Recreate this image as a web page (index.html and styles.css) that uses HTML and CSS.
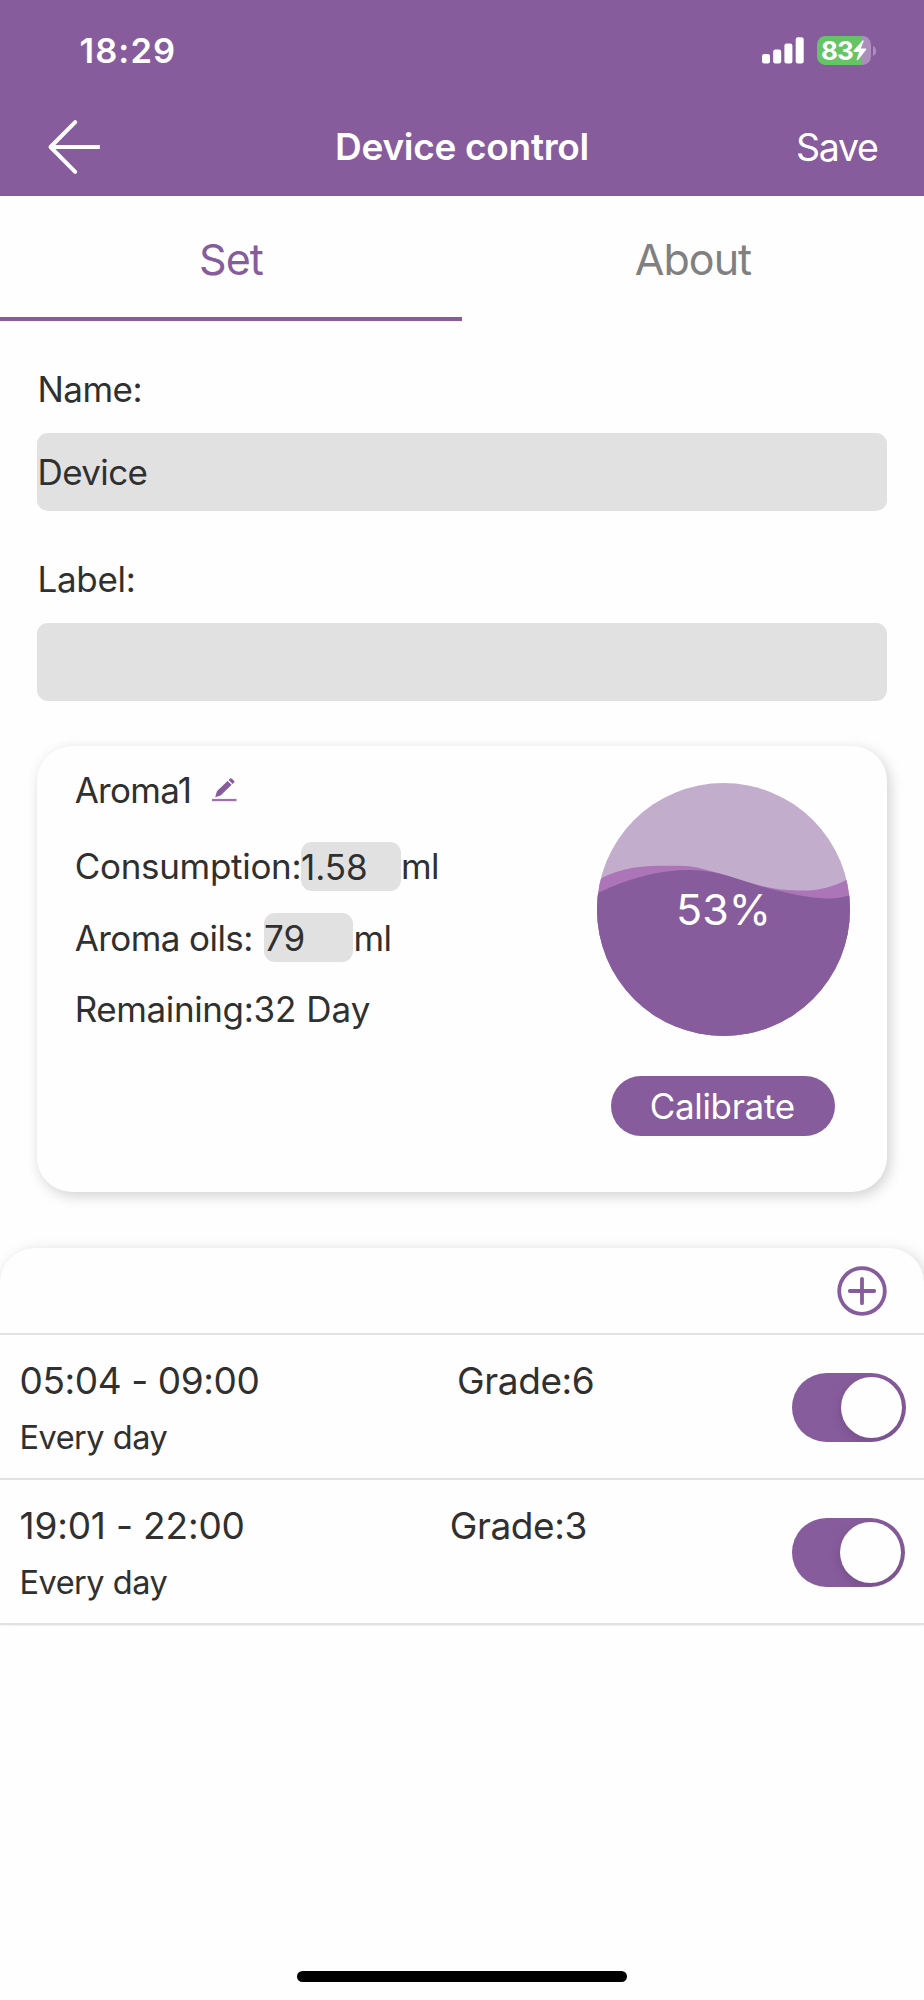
FILE: index.html
```html
<!DOCTYPE html>
<html lang="en">
<head>
<meta charset="utf-8">
<title>Device control</title>
<link rel="stylesheet" href="styles.css">
</head>
<body>
<header class="header">
  <div class="status">
    <span class="clock">18:29</span>
    <div class="status-icons">
      <svg class="signal" width="42" height="27" viewBox="0 0 42 27" fill="#fff">
        <rect x="0" y="17" width="8" height="9.5" rx="2.2"/>
        <rect x="11.2" y="12.5" width="8" height="14" rx="2.2"/>
        <rect x="22.4" y="6.5" width="8" height="20" rx="2.2"/>
        <rect x="33.7" y="0.3" width="8" height="26.2" rx="2.2"/>
      </svg>
      <div class="battery">
        <span class="battery-level">83</span>
        <svg class="bolt" width="14" height="21" viewBox="0 0 14 21" fill="#fff"><path d="M9.8 0.3L0.6 10.6Q0.1 11.8 1.3 11.9H6L3.6 19.6Q4 20.8 5 20L13.2 9.8Q13.5 8.7 12.4 8.6H7.8L10.7 1Q10.6 0 9.8 0.3Z"/></svg>
      </div>
      <svg class="battery-tip" width="4" height="10" viewBox="0 0 4 10"><path d="M0 0C4.2 1.6 4.2 8.4 0 10Z" fill="#ab8ebb"/></svg>
    </div>
  </div>
  <nav class="nav">
    <svg class="back" width="53" height="56" viewBox="0 0 53 56" fill="none" stroke="#fff" stroke-width="4">
      <path d="M28.2 3.2L3.5 28L28.2 52.8" stroke-linecap="round" stroke-linejoin="round"/><path d="M4 28H52.8"/>
    </svg>
    <h1 class="title">Device control</h1>
    <span class="save">Save</span>
  </nav>
</header>

<div class="tabs">
  <div class="tab tab-active">Set</div>
  <div class="tab">About</div>
</div>

<main class="form">
  <label class="label label-name">Name:</label>
  <div class="input">Device</div>
  <label class="label label-tag">Label:</label>
  <div class="input"></div>

  <section class="card">
    <div class="details">
      <div class="detail detail-title">
        <span class="aroma">Aroma1</span>
        <svg class="pencil" width="25" height="24" viewBox="0 0 25 24" fill="#875c9c">
          <path d="M3.2 19.3L4.6 14.2Q4.9 13.3 5.6 12.6L15.6 2.9L19.6 6.8L9.4 16.8Q8.8 17.4 7.8 17.8Z"/>
          <path d="M16.6 1.9L18 0.6Q19 -0.1 19.9 0.7L22 2.8Q22.8 3.7 22.1 4.5L20.6 5.9Z"/>
          <rect x="0" y="20.9" width="24.5" height="2.3" fill="#9a75ac"/>
        </svg>
      </div>
      <div class="detail"><span class="key key-consumption">Consumption:</span><span class="chip chip-rate">1.58</span><span class="unit">ml</span></div>
      <div class="detail"><span class="key key-oils">Aroma oils:</span><span class="chip chip-oils">79</span><span class="unit">ml</span></div>
      <div class="detail"><span class="key key-remaining">Remaining:</span><span class="days">32 Day</span></div>
    </div>
    <div class="level">
      <div class="gauge">
        <svg class="waves" width="253" height="253" viewBox="0 0 253 253">
          <clipPath id="disc"><circle cx="126.5" cy="126.5" r="126.5"/></clipPath>
          <g clip-path="url(#disc)">
            <rect width="253" height="253" fill="#c2adcc"/>
            <path d="M0 97.5C18 87.5 36 83 63.5 82.8C96 82.3 96 83 123.5 90.8C151 99 172 107.5 200 107.5C222 108 234 105 253 95V253H0Z" fill="#ac75b8"/>
            <path d="M0 110.5C32 95 62 87 93 87C120 87 138 95.5 163.5 103.2C188 110 212 115.7 233.5 115.5C242 115.3 247 114 253 112V253H0Z" fill="#875c9c"/>
          </g>
        </svg>
        <span class="percent">53%</span>
      </div>
      <div class="calibrate">Calibrate</div>
    </div>
  </section>
</main>

<section class="sheet">
  <div class="sheet-bar">
    <svg class="add" width="50" height="50" viewBox="0 0 50 50" fill="none" stroke="#875c9c" stroke-width="3.8">
      <circle cx="25" cy="25" r="22.8"/><path d="M12.8 25H37.2M25 12.8V37.2" stroke-linecap="round"/>
    </svg>
  </div>
  <div class="schedule">
    <div class="when"><span class="time time-first">05:04 - 09:00</span><span class="repeat">Every day</span></div>
    <span class="grade">Grade:6</span>
    <div class="toggle"><div class="knob"></div></div>
  </div>
  <div class="schedule schedule-last">
    <div class="when"><span class="time">19:01 - 22:00</span><span class="repeat">Every day</span></div>
    <span class="grade">Grade:3</span>
    <div class="toggle"><div class="knob"></div></div>
  </div>
</section>
<div class="home-indicator"></div>
</body>
</html>
```
FILE: styles.css
```css
* { box-sizing: border-box; }
body {
  margin: 0;
  min-height: 2000px;
  display: flex;
  flex-direction: column;
  overflow-x: hidden;
  background: #fefefe;
  color: #303030;
  font-family: Inter, "Liberation Sans", sans-serif;
  font-size: 35px;
  white-space: nowrap;
}
.header { height: 196.4px; background: #875c9c; color: #fff; }
.status {
  height: 101px;
  padding: 0 47.5px 0 79.5px;
  display: flex;
  align-items: center;
  justify-content: space-between;
}
.clock { font-size: 34.5px; font-weight: 600; letter-spacing: 1.08px; line-height: 101px; }
.status-icons { display: flex; align-items: center; }
.battery {
  width: 54px;
  height: 29px;
  margin-left: 12.5px;
  padding-left: 4.5px;
  display: flex;
  align-items: center;
  border-radius: 8.5px;
  background: linear-gradient(90deg, #65c466 83%, #ab8ebb 83%);
}
.battery-level { width: 32px; font-size: 26px; font-weight: 700; letter-spacing: -0.8px; line-height: 29px; }
.battery-tip { margin-left: 2px; }
.nav {
  height: 92px;
  padding: 0 46.5px;
  display: grid;
  grid-template-columns: 1fr auto 1fr;
  align-items: center;
}
.title { margin: 0; font-size: 37px; font-weight: 600; letter-spacing: -0.29px; line-height: 92px; }
.save { justify-self: end; font-size: 37.5px; letter-spacing: -1.3px; }

.tabs { height: 125px; display: flex; font-size: 43px; color: #808080; }
.tab {
  flex: 1;
  padding-top: 6px;
  border-bottom: 4.5px solid transparent;
  text-align: center;
  line-height: 114px;
  letter-spacing: -1px;
}
.tab-active { color: #875c9c; border-color: #875c9c; letter-spacing: -0.83px; }

.form { padding: 45.6px 37px 0; display: flex; flex-direction: column; }
.label { line-height: 44px; margin-bottom: 22px; padding-left: 0.5px; }
.label-name { letter-spacing: -0.52px; }
.label-tag { letter-spacing: -0.3px; margin-top: 46px; }
.input { height: 78px; padding-left: 0.5px; border-radius: 11px; background: #e1e1e1; line-height: 79px; letter-spacing: -0.6px; }

.card {
  height: 446.5px;
  margin-top: 44.8px;
  display: flex;
  justify-content: space-between;
  border-radius: 35px;
  background: #fefefe;
  box-shadow: 3px 4px 14px rgba(0, 0, 0, 0.18);
}
.details { padding: 4px 0 0 37.7px; }
.detail { height: 71.5px; display: flex; align-items: center; }
.detail-title { height: 80.5px; gap: 18px; }
.aroma { width: 119px; letter-spacing: -0.73px; }
.key-consumption { width: 226.3px; letter-spacing: -0.3px; }
.key-oils { width: 189.3px; letter-spacing: -0.58px; }
.key-remaining { width: 178.8px; letter-spacing: -0.39px; }
.chip { height: 49px; border-radius: 11px; background: #e1e1e1; line-height: 50px; }
.chip-rate { width: 100px; }
.chip-oils { width: 89.5px; }
.unit { letter-spacing: -0.6px; }
.level { width: 328px; padding-top: 37px; display: flex; flex-direction: column; align-items: center; gap: 40.5px; color: #fff; }
.gauge { display: grid; place-items: center; }
.waves, .percent { grid-area: 1 / 1; }
.percent { font-size: 43px; padding-left: 1px; }
.calibrate { width: 224px; height: 60px; padding-right: 1.5px; border-radius: 30px; background: #875c9c; text-align: center; line-height: 60px; letter-spacing: -0.32px; }

.sheet { margin-top: 55.3px; border-radius: 35px 35px 0 0; background: #fefefe; box-shadow: 3px 3px 14px rgba(0, 0, 0, 0.17); clip-path: inset(-30px 0 0 0); }
.sheet-bar { height: 87.4px; padding: 18.5px 37.5px 0 0; display: flex; justify-content: flex-end; border-bottom: 2.5px solid #e1e1e1; }
.schedule { height: 145px; padding: 17px 18.5px 0 19.5px; display: flex; justify-content: space-between; border-bottom: 2.5px solid #e1e1e1; }
.schedule-last { height: 145.5px; }
.when { display: flex; flex-direction: column; }
.time { font-size: 37px; line-height: 57px; letter-spacing: -0.16px; }
.time-first { letter-spacing: -0.4px; }
.repeat { font-size: 32.5px; line-height: 57px; letter-spacing: -0.5px; }
.grade { font-size: 37px; line-height: 57px; letter-spacing: -0.4px; }
.toggle { width: 113.5px; height: 69px; margin-top: 21px; padding: 4px; display: flex; justify-content: flex-end; border-radius: 35px; background: #875c9c; overflow: hidden; }
.knob { width: 61px; height: 61px; border-radius: 50%; background: #fefefe; box-shadow: 0 4px 12px rgba(0, 0, 0, 0.14); }
.home-indicator { width: 330px; height: 11px; margin: auto auto 18px; border-radius: 6px; background: #000; }
```
